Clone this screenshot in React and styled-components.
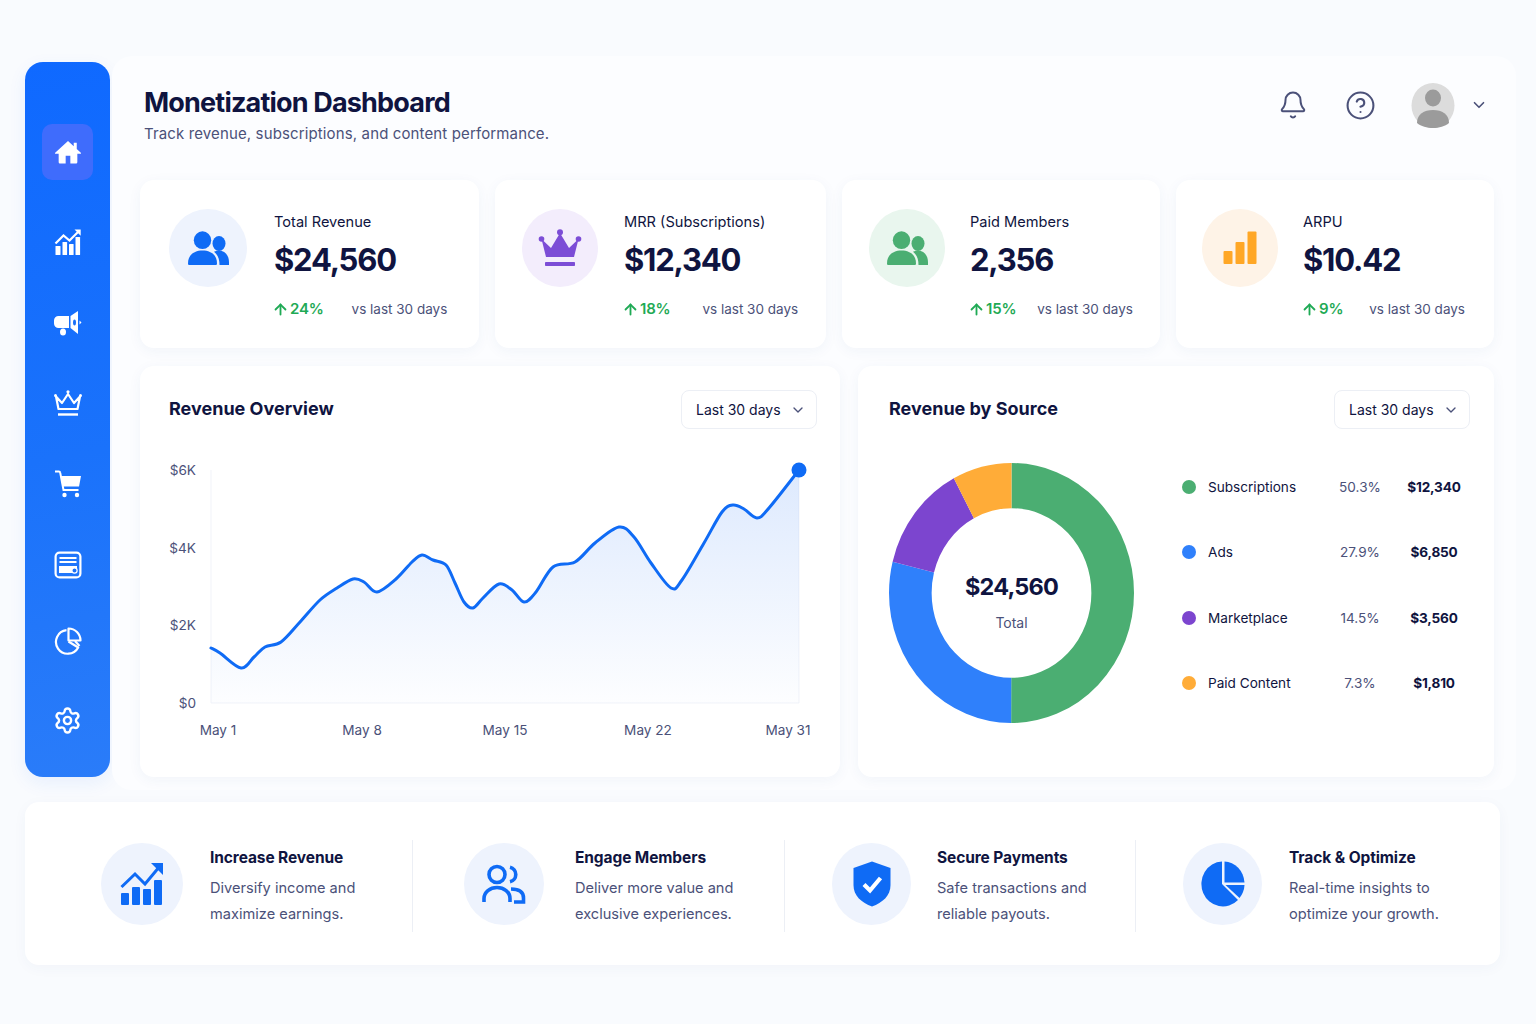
import styled, { createGlobalStyle } from 'styled-components'
import { Bell, CircleHelp, ChevronDown, ArrowUp, Settings } from 'lucide-react'

const GlobalStyle = createGlobalStyle`
    html, body {
        margin: 0;
        padding: 0;
        background: #f9fbfe;
    }
    * {
        box-sizing: border-box;
    }
`

const NAVY = '#0f1440'
const SLATE = '#4b5179'
const BLUE = '#0f6bf5'
const GREEN = '#4bae72'
const PURPLE = '#7c45cf'
const ORANGE = '#ffac38'

// line of the revenue chart, in page pixels
const linePoints = [
    [211, 648], [220, 653], [241, 668], [254, 657], [265, 647], [281, 642], [300, 622], [320, 600],
    [337, 588], [353, 579], [364, 582], [377, 592], [396, 579], [412, 562], [422, 555], [433, 560],
    [446, 565], [455, 583], [464, 602], [473, 608], [483, 598], [499, 584], [512, 590], [524, 602],
    [536, 592], [553, 567], [575, 562], [595, 543], [619, 527], [634, 537], [651, 563], [671, 588],
    [682, 580], [704, 543], [722, 512], [733, 505], [744, 509], [757, 518], [769, 508], [799, 470],
]

const smoothPath = (pts) => {
    let d = `M${pts[0][0]} ${pts[0][1]}`
    for (let i = 0; i < pts.length - 1; i++) {
        const p0 = pts[Math.max(i - 1, 0)]
        const p1 = pts[i]
        const p2 = pts[i + 1]
        const p3 = pts[Math.min(i + 2, pts.length - 1)]
        const c1x = p1[0] + (p2[0] - p0[0]) / 6
        const c1y = p1[1] + (p2[1] - p0[1]) / 6
        const c2x = p2[0] - (p3[0] - p1[0]) / 6
        const c2y = p2[1] - (p3[1] - p1[1]) / 6
        d += ` C${c1x} ${c1y} ${c2x} ${c2y} ${p2[0]} ${p2[1]}`
    }
    return d
}

const HomeIcon = () => (
    <svg width="28" height="28" viewBox="0 0 24 24" fill="#fff">
        <path d="M12 2.5 1 12.6c-.4.4-.1 1 .4 1H4v6.9c0 .8.6 1.4 1.4 1.4H10v-6.6h4v6.6h4.6c.8 0 1.4-.6 1.4-1.4v-6.9h2.6c.5 0 .8-.6.4-1L19.5 9.4V4h-2.6v3.1z" />
    </svg>
)

const GrowthNavIcon = () => (
    <svg width="28" height="28" viewBox="0 0 28 28" fill="#fff">
        <rect x="1.5" y="18" width="5" height="9" rx="0.6" />
        <rect x="8.5" y="14" width="4.6" height="13" rx="0.6" />
        <rect x="15" y="16" width="4.6" height="11" rx="0.6" />
        <rect x="21.5" y="9" width="4.6" height="18" rx="0.6" />
        <path d="M1.5 15.5 9.5 7.5l6 5L25 3" fill="none" stroke="#fff" strokeWidth="2.2" />
        <path d="M20.5 1.5h6.2v6.2z" />
    </svg>
)

const MegaphoneIcon = () => (
    <svg width="30" height="28" viewBox="0 0 30 28" fill="#fff">
        <path d="M5.5 7H16v12H5.500a4.500 4.500 0 0 1-4.500-4.500v-3A4.500 4.500 0 0 1 5.500 7z" />
        <path d="M17.500 7 25 2v23l-7.500-6z" />
        <ellipse cx="21.500" cy="13.500" rx="1.500" ry="3" fill="#1a70f8" />
        <path d="M26.500 11.500 28.500 13.500 26.500 15.500z" />
        <ellipse cx="10" cy="23" rx="3" ry="3.500" />
    </svg>
)

const CrownNavIcon = () => (
    <svg width="30" height="28" viewBox="0 0 30 28" fill="none" stroke="#fff" strokeWidth="2.2" strokeLinejoin="round">
        <path d="M3 7.500 9 14l6-9 6 9 6-6.500-2.500 12.500h-19z" />
        <path d="M5 25.500h20" strokeWidth="2.400" />
        <circle cx="15" cy="2.800" r="1.600" fill="#fff" stroke="none" />
        <circle cx="2.500" cy="6.500" r="1.500" fill="#fff" stroke="none" />
        <circle cx="27.500" cy="6.500" r="1.500" fill="#fff" stroke="none" />
    </svg>
)

const CartIcon = () => (
    <svg width="28" height="28" viewBox="0 0 28 28" fill="#fff">
        <path d="M1 1.500h3.800c.7 0 1.300.5 1.400 1.200L9.500 20h15" fill="none" stroke="#fff" strokeWidth="2" />
        <path d="M6.500 6H27l-2 10.500H8.500z" />
        <circle cx="10.500" cy="25" r="2.200" />
        <circle cx="23" cy="25" r="2.200" />
    </svg>
)

const WalletIcon = () => (
    <svg width="28" height="28" viewBox="0 0 28 28" fill="none" stroke="#fff" strokeWidth="2.200">
        <rect x="1.600" y="1.600" width="24.800" height="24.800" rx="4" />
        <path d="M5.500 7h17M5.500 11h17" strokeWidth="1.800" />
        <path d="M5 15h18v7H5z" fill="#fff" stroke="none" />
        <circle cx="20.500" cy="19.500" r="2.600" fill="#1a70f8" stroke="#fff" strokeWidth="1.200" />
    </svg>
)

const PieNavIcon = () => (
    <svg width="28" height="28" viewBox="0 0 28 28" fill="none" stroke="#fff" strokeWidth="2.200" strokeLinejoin="round">
        <path d="M12.500 3.200A11.800 11.800 0 1 0 24.200 20.500L14.500 14.500" />
        <path d="M14.500 1.500A12 12 0 0 1 26.500 13.500H14.500z" />
        <path d="M21 14 25.500 19" />
    </svg>
)

const PeopleIcon = ({ color }) => (
    <svg width="43" height="35" viewBox="0 0 43 35" fill={color}>
        <ellipse cx="15.500" cy="9.200" rx="8.700" ry="8.900" />
        <ellipse cx="32" cy="12.500" rx="6.500" ry="7.500" />
        <path d="M1 32.500C1 24 7 19.500 15.500 19.500S30 24 30 32.500c0 1-.6 1.500-1.500 1.500h-26C1.600 34 1 33.500 1 32.500z" />
        <path d="M27 20.800c1.600-.8 3.300-1 5-1 6 0 10 4.500 10 11.500v2.700H32.500c0-6-1.800-10.500-5.500-13.200z" />
    </svg>
)

const CrownFillIcon = () => (
    <svg width="44" height="38" viewBox="0 0 44 38" fill="#7c4dd6">
        <circle cx="3.500" cy="10" r="2.800" />
        <circle cx="22" cy="3.200" r="3" />
        <circle cx="40.500" cy="10" r="2.800" />
        <path d="M3.500 10 13 19 22 4l9 15 9.500-9L36 28H8z" />
        <rect x="7" y="33" width="30" height="4" rx="0.800" />
    </svg>
)

const BarsIcon = () => (
    <svg width="34" height="34" viewBox="0 0 34 34" fill="#ffa726">
        <rect x="0.500" y="20" width="9" height="13" rx="1" />
        <rect x="12.500" y="11" width="9" height="22" rx="1" />
        <rect x="24.500" y="0.500" width="9" height="32.500" rx="1" />
    </svg>
)

const GrowthIcon = () => (
    <svg width="44" height="44" viewBox="0 0 44 44" fill={BLUE}>
        <rect x="1" y="31" width="8" height="12" rx="1" />
        <rect x="12" y="25" width="8" height="18" rx="1" />
        <rect x="23" y="27" width="8" height="16" rx="1" />
        <rect x="34" y="18" width="8" height="25" rx="1" />
        <path d="M1.500 25 15 12l10 10L40 4" fill="none" stroke={BLUE} strokeWidth="3" />
        <path d="M31 1h12v12z" />
    </svg>
)

const MembersIcon = () => (
    <svg width="44" height="40" viewBox="0 0 44 40" fill="none" stroke={BLUE} strokeWidth="3.600">
        <circle cx="15" cy="10.500" r="8" />
        <path d="M28 3.200a7.500 7.500 0 0 1 0 14.600" />
        <path d="M2 38v-3.500C2 28 8 23.500 15 23.500S28 28 28 34.500V38" />
        <path d="M29 25c7 0 12.500 2.500 12.500 9v4H32" />
    </svg>
)

const ShieldIcon = () => (
    <svg width="38" height="46" viewBox="0 0 38 46">
        <path d="M19 .5 37.500 7v17C37.500 35 29.500 41.500 19 45.500 8.500 41.500.5 35 .5 24V7z" fill={BLUE} />
        <path d="M11 23.500 17 29.500 27.500 17" fill="none" stroke="#fff" strokeWidth="4.200" />
    </svg>
)

const PieFillIcon = () => (
    <svg width="44" height="46" viewBox="0 0 44 46" fill={BLUE}>
        <path d="M21 .5A21.500 22.500 0 1 0 37 39L21 23z" />
        <path d="M23.500.5A20.500 22.500 0 0 1 43.500 21.500H23.500z" />
        <path d="M24.500 24H43.500A21 22 0 0 1 38.500 37z" />
    </svg>
)

const navItems = [
    { icon: <HomeIcon />, active: true, top: 0 },
    { icon: <GrowthNavIcon />, top: 34 },
    { icon: <MegaphoneIcon />, top: 25 },
    { icon: <CrownNavIcon />, top: 24 },
    { icon: <CartIcon />, top: 25 },
    { icon: <WalletIcon />, top: 25 },
    { icon: <PieNavIcon />, top: 20 },
    { icon: <Settings size={29} color="#fff" strokeWidth={2} />, top: 23 },
]

const stats = [
    { label: 'Total Revenue', value: '$24,560', delta: '24%', gap: 28, width: 339, pad: 29, size: 78, left: 27, tint: '#eef3fd', icon: <PeopleIcon color={BLUE} /> },
    { label: 'MRR (Subscriptions)', value: '$12,340', delta: '18%', gap: 32, width: 331, pad: 27, size: 76, left: 26, tint: '#f3edfc', icon: <CrownFillIcon /> },
    { label: 'Paid Members', value: '2,356', delta: '15%', gap: 21, width: 318, pad: 27, size: 76, left: 25, tint: '#e9f6ee', icon: <PeopleIcon color={GREEN} /> },
    { label: 'ARPU', value: '$10.42', delta: '9%', gap: 26, width: 318, pad: 26, size: 76, left: 25, tint: '#fef3e7', icon: <BarsIcon /> },
]

const sources = [
    { name: 'Subscriptions', pct: '50.3%', amount: '$12,340', color: GREEN },
    { name: 'Ads', pct: '27.9%', amount: '$6,850', color: '#2f80fb' },
    { name: 'Marketplace', pct: '14.5%', amount: '$3,560', color: PURPLE },
    { name: 'Paid Content', pct: '7.3%', amount: '$1,810', color: ORANGE },
]

const features = [
    { title: 'Increase Revenue', lines: ['Diversify income and', 'maximize earnings.'], width: 387, left: 76, gap: 27, size: 82, icon: <GrowthIcon />, first: true },
    { title: 'Engage Members', lines: ['Deliver more value and', 'exclusive experiences.'], width: 372, left: 51, gap: 31, size: 80, icon: <MembersIcon /> },
    { title: 'Secure Payments', lines: ['Safe transactions and', 'reliable payouts.'], width: 351, left: 47, gap: 26, size: 79, icon: <ShieldIcon /> },
    { title: 'Track & Optimize', lines: ['Real-time insights to', 'optimize your growth.'], width: 365, left: 47, gap: 27, size: 79, icon: <PieFillIcon /> },
]

// donut slices, share of a full turn, first one starts at 12 o'clock
const slices = [
    { share: 0.5, color: GREEN },
    { share: 0.288, color: '#2f80fb' },
    { share: 0.133, color: PURPLE },
    { share: 0.079, color: ORANGE },
]

const Donut = () => {
    const r = 82.600
    const circ = 2 * Math.PI * r
    let turned = 0
    return (
        <DonutBox>
            <svg width="245" height="260" viewBox="0 0 200 200" preserveAspectRatio="none">
                {slices.map((s) => {
                    const el = (
                        <circle
                            key={s.color}
                            cx="100"
                            cy="100"
                            r={r}
                            fill="none"
                            stroke={s.color}
                            strokeWidth="34.800"
                            strokeDasharray={`${s.share * circ} ${circ}`}
                            strokeDashoffset={-turned * circ}
                            transform="rotate(-90 100 100)"
                        />
                    )
                    turned += s.share
                    return el
                })}
            </svg>
            <DonutCenter>
                <DonutValue>$24,560</DonutValue>
                <DonutLabel>Total</DonutLabel>
            </DonutCenter>
        </DonutBox>
    )
}

const RevenueChart = () => {
    const line = smoothPath(linePoints)
    return (
        <svg width="648" height="295" viewBox="169 455 648 295">
            <defs>
                <linearGradient id="areaFill" x1="0" y1="0" x2="0" y2="1">
                    <stop offset="0" stopColor="#1f6ff5" stopOpacity="0.15" />
                    <stop offset="1" stopColor="#1f6ff5" stopOpacity="0.01" />
                </linearGradient>
            </defs>
            <path d="M211 470V703H799V470" fill="none" stroke="#f1f3f9" strokeWidth="1" />
            <path d={`${line} L799 703 L211 703 Z`} fill="url(#areaFill)" />
            <path d={line} fill="none" stroke={BLUE} strokeWidth="3" strokeLinecap="round" />
            <circle cx="799" cy="470" r="7.500" fill={BLUE} />
            {[['$6K', 470], ['$4K', 548], ['$2K', 625], ['$0', 703]].map(([t, y]) => (
                <AxisText key={t} x="196" y={y + 5} textAnchor="end">{t}</AxisText>
            ))}
            {[['May 1', 218], ['May 8', 362], ['May 15', 505], ['May 22', 648], ['May 31', 788]].map(([t, x]) => (
                <AxisText key={t} x={x} y="735" textAnchor="middle">{t}</AxisText>
            ))}
        </svg>
    )
}

const RangeSelect = () => (
    <Select>
        Last 30 days
        <ChevronDown size={16} color={SLATE} strokeWidth={2} />
    </Select>
)

const App = () => {
    return (
        <Page>
            <GlobalStyle />
            <TopRow>
                <Sidebar>
                    {navItems.map((item, i) => (
                        <NavItem key={i} $active={item.active} $top={item.top}>{item.icon}</NavItem>
                    ))}
                </Sidebar>
                <Main>
                    <Header>
                        <div>
                            <Title>Monetization Dashboard</Title>
                            <Subtitle>Track revenue, subscriptions, and content performance.</Subtitle>
                        </div>
                        <HeaderTools>
                            <Tool><Bell size={30} color={SLATE} strokeWidth={1.6} /></Tool>
                            <Tool $left={37}><CircleHelp size={31} color={SLATE} strokeWidth={1.6} /></Tool>
                            <Tool $left={35}>
                                <svg width="44" height="45" viewBox="0 0 44 45">
                                    <ellipse cx="22" cy="22.500" rx="21.500" ry="22.500" fill="#dcdcdc" />
                                    <ellipse cx="22" cy="15" rx="8" ry="8.500" fill="#9b9b9b" />
                                    <path d="M6 40c0-9 7-13 16-13s16 4 16 13c-4 3.500-10 5-16 5S10 43.500 6 40z" fill="#9b9b9b" />
                                </svg>
                            </Tool>
                            <Tool $left={15}><ChevronDown size={18} color={SLATE} strokeWidth={2.2} /></Tool>
                        </HeaderTools>
                    </Header>
                    <StatGrid>
                        {stats.map((s) => (
                            <StatCard key={s.label} $width={s.width} $pad={s.pad}>
                                <StatCircle $size={s.size} $tint={s.tint}>{s.icon}</StatCircle>
                                <StatBody $left={s.left}>
                                    <StatLabel>{s.label}</StatLabel>
                                    <StatValue>{s.value}</StatValue>
                                    <DeltaRow $gap={s.gap}>
                                        <Delta>
                                            <ArrowUp size={17} strokeWidth={2.6} />
                                            {s.delta}
                                        </Delta>
                                        <Compare>vs last 30 days</Compare>
                                    </DeltaRow>
                                </StatBody>
                            </StatCard>
                        ))}
                    </StatGrid>
                    <ChartGrid>
                        <ChartCard>
                            <CardHead>
                                <CardTitle>Revenue Overview</CardTitle>
                                <RangeSelect />
                            </CardHead>
                            <ChartWrap>
                                <RevenueChart />
                            </ChartWrap>
                        </ChartCard>
                        <ChartCard $right>
                            <CardHead>
                                <CardTitle>Revenue by Source</CardTitle>
                                <RangeSelect />
                            </CardHead>
                            <SourceRow>
                                <Donut />
                                <Legend>
                                    {sources.map((s) => (
                                        <LegendRow key={s.name}>
                                            <Dot $color={s.color} />
                                            <LegendName>{s.name}</LegendName>
                                            <LegendPct>{s.pct}</LegendPct>
                                            <LegendAmount>{s.amount}</LegendAmount>
                                        </LegendRow>
                                    ))}
                                </Legend>
                            </SourceRow>
                        </ChartCard>
                    </ChartGrid>
                </Main>
            </TopRow>
            <BottomPanel>
                {features.map((f) => (
                    <Feature key={f.title} $width={f.width} $left={f.left} $gap={f.gap} $first={f.first}>
                        <FeatureCircle $size={f.size}>{f.icon}</FeatureCircle>
                        <div>
                            <FeatureTitle>{f.title}</FeatureTitle>
                            {f.lines.map((l) => <FeatureLine key={l}>{l}</FeatureLine>)}
                        </div>
                    </Feature>
                ))}
            </BottomPanel>
        </Page>
    )
}

const Page = styled.div`
    width: 1536px;
    height: 1024px;
    padding: 56px 20px 0 25px;
    overflow: hidden;
    background: #f9fbfe;
    font-family: Inter, "Liberation Sans", sans-serif;
    color: ${NAVY};
`
const TopRow = styled.div`
    display: flex;
    align-items: flex-start;
    gap: 2px;
`
const Sidebar = styled.nav`
    width: 85px;
    height: 715px;
    margin-top: 6px;
    padding-top: 62px;
    display: flex;
    flex-direction: column;
    align-items: center;
    border-radius: 18px;
    background: linear-gradient(170deg, #0f69ff 0%, #1a72fb 55%, #2a7cf9 100%);
    box-shadow: 0 6px 18px rgba(30, 100, 240, 0.08);
`
const NavItem = styled.div`
    width: 51px;
    height: 56px;
    margin-top: ${(p) => p.$top}px;
    display: flex;
    align-items: center;
    justify-content: center;
    border-radius: 10px;
    background: ${(p) => (p.$active ? '#3f6cfc' : 'transparent')};
`
const Main = styled.main`
    width: 1404px;
    height: 734px;
    padding: 0 22px 0 28px;
    border-radius: 20px;
    background: #fcfdff;
`
const Header = styled.header`
    height: 124px;
    padding: 31px 6px 0 4px;
    display: flex;
    justify-content: space-between;
    align-items: flex-start;
`
const Title = styled.h1`
    margin: 0;
    font-size: 27px;
    line-height: 32px;
    font-weight: 700;
    letter-spacing: -0.82px;
`
const Subtitle = styled.p`
    margin: 5px 0 0;
    font-size: 15px;
    line-height: 20px;
    letter-spacing: 0.13px;
    color: ${SLATE};
`
const HeaderTools = styled.div`
    display: flex;
    align-items: center;
    height: 44px;
    margin-top: -4px;
`
const Tool = styled.div`
    display: flex;
    margin-left: ${(p) => p.$left || 0}px;
`
const StatGrid = styled.section`
    display: flex;
    gap: 16px;
`
const StatCard = styled.article`
    width: ${(p) => p.$width}px;
    height: 168px;
    padding: 29px 0 0 ${(p) => p.$pad}px;
    display: flex;
    border-radius: 14px;
    background: #fff;
    box-shadow: 0 3px 14px rgba(40, 70, 140, 0.05);
`
const StatCircle = styled.div`
    width: ${(p) => p.$size}px;
    height: 78px;
    flex: none;
    display: flex;
    align-items: center;
    justify-content: center;
    border-radius: 50%;
    background: ${(p) => p.$tint};
`
const StatBody = styled.div`
    margin-left: ${(p) => p.$left}px;
    padding-top: 3px;
`
const StatLabel = styled.div`
    font-size: 14.6px;
    line-height: 20px;
`
const StatValue = styled.div`
    margin-top: 8px;
    font-size: 31px;
    line-height: 40px;
    font-weight: 700;
    letter-spacing: -1.2px;
`
const DeltaRow = styled.div`
    margin-top: 19px;
    display: flex;
    align-items: center;
    gap: ${(p) => p.$gap}px;
    line-height: 20px;
`
const Delta = styled.span`
    display: flex;
    align-items: center;
    gap: 1px;
    margin-left: -2px;
    font-size: 15px;
    font-weight: 600;
    letter-spacing: -0.2px;
    color: #1faa55;
`
const Compare = styled.span`
    font-size: 13.5px;
    color: ${SLATE};
`
const ChartGrid = styled.section`
    margin-top: 18px;
    display: grid;
    grid-template-columns: 700px 636px;
    gap: 18px;
`
const ChartCard = styled.article`
    height: 411px;
    padding: 24px ${(p) => (p.$right ? 24 : 23)}px 0 ${(p) => (p.$right ? 31 : 29)}px;
    border-radius: 14px;
    background: #fff;
    box-shadow: 0 3px 14px rgba(40, 70, 140, 0.05);
`
const CardHead = styled.div`
    display: flex;
    justify-content: space-between;
    align-items: center;
    height: 39px;
`
const CardTitle = styled.h2`
    margin: 0 0 3px;
    font-size: 18px;
    font-weight: 700;
`
const Select = styled.div`
    width: 136px;
    height: 39px;
    padding: 0 10px 0 14px;
    display: flex;
    align-items: center;
    justify-content: space-between;
    border: 1px solid #eceff5;
    border-radius: 8px;
    background: #fff;
    font-size: 14px;
`
const ChartWrap = styled.div`
    margin-top: 26px;
    display: flex;
`
const AxisText = styled.text`
    font-size: 13.6px;
    fill: ${SLATE};
`
const SourceRow = styled.div`
    margin-top: 25px;
    display: flex;
    align-items: flex-start;
    gap: 48px;
`
const DonutBox = styled.div`
    position: relative;
    width: 245px;
    height: 260px;
    margin-top: 9px;
    svg {
        display: block;
    }
`
const DonutCenter = styled.div`
    position: absolute;
    inset: 0;
    padding-top: 109px;
    display: flex;
    flex-direction: column;
    align-items: center;
`
const DonutValue = styled.div`
    font-size: 23.5px;
    line-height: 30px;
    font-weight: 700;
    letter-spacing: -0.8px;
`
const DonutLabel = styled.div`
    margin-top: 11px;
    font-size: 14px;
    line-height: 20px;
    color: ${SLATE};
`
const Legend = styled.div`
    display: flex;
    flex-direction: column;
`
const LegendRow = styled.div`
    height: 65.5px;
    display: grid;
    grid-template-columns: 26px 122px 60px 88px;
    align-items: center;
    font-size: 13.6px;
`
const Dot = styled.span`
    width: 14px;
    height: 14px;
    border-radius: 50%;
    background: ${(p) => p.$color};
`
const LegendName = styled.span``
const LegendPct = styled.span`
    text-align: center;
    color: ${SLATE};
`
const LegendAmount = styled.span`
    text-align: center;
    font-weight: 700;
    letter-spacing: -0.2px;
`
const BottomPanel = styled.section`
    width: 1475px;
    height: 163px;
    margin-top: 12px;
    padding-top: 38px;
    display: flex;
    border-radius: 14px;
    background: #fff;
    box-shadow: 0 3px 14px rgba(40, 70, 140, 0.04);
`
const Feature = styled.div`
    width: ${(p) => p.$width}px;
    height: 92px;
    padding-left: ${(p) => p.$left}px;
    display: flex;
    align-items: center;
    gap: ${(p) => p.$gap}px;
    border-left: ${(p) => (p.$first ? 'none' : '1px solid #eceff5')};
`
const FeatureCircle = styled.div`
    width: ${(p) => p.$size}px;
    height: 82px;
    flex: none;
    margin-top: -5px;
    display: flex;
    align-items: center;
    justify-content: center;
    border-radius: 50%;
    background: #eef3fd;
`
const FeatureTitle = styled.h3`
    margin: 0 0 4px;
    font-size: 15.5px;
    line-height: 26px;
    font-weight: 700;
    letter-spacing: -0.1px;
`
const FeatureLine = styled.p`
    margin: 0;
    font-size: 14.6px;
    line-height: 26px;
    color: ${SLATE};
`

export default App
